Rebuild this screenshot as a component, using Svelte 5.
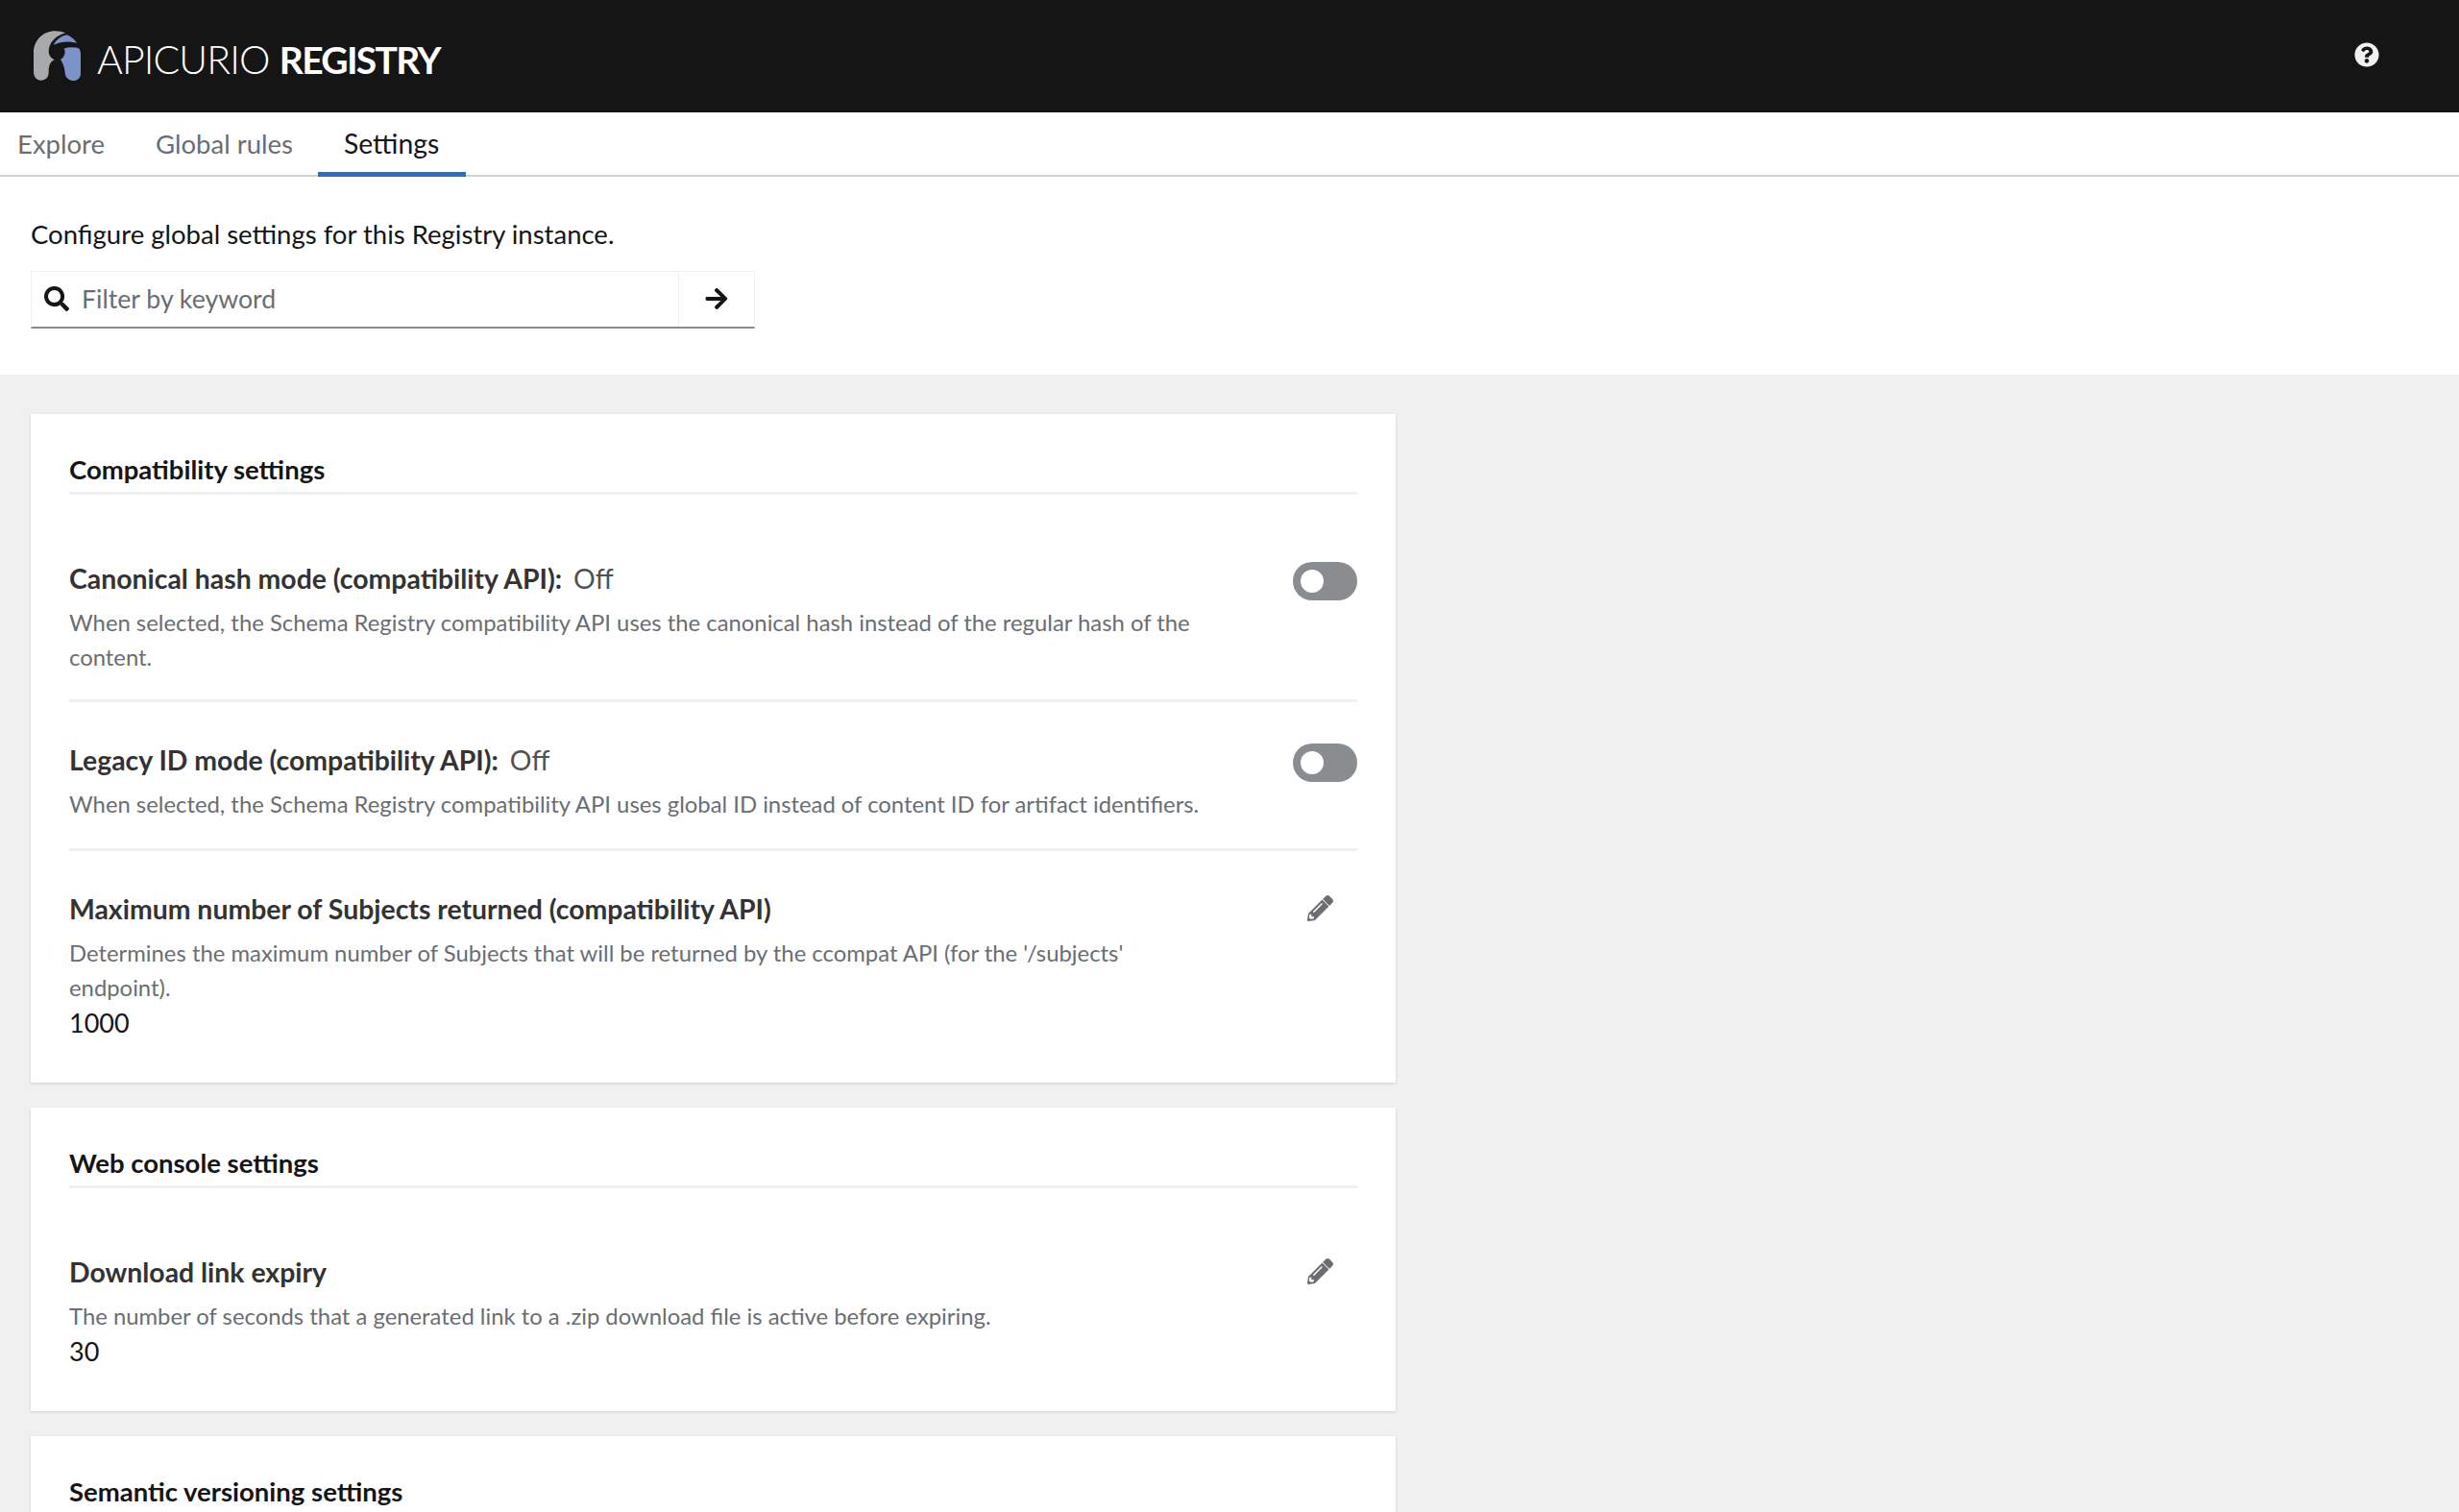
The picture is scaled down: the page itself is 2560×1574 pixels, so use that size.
<script>
    const tabs = ["Explore", "Global rules", "Settings"];

    const groups = [
        {
            title: "Compatibility settings",
            rows: [
                {
                    label: "Canonical hash mode (compatibility API):",
                    state: "Off",
                    desc: "When selected, the Schema Registry compatibility API uses the canonical hash instead of the regular hash of the content.",
                },
                {
                    label: "Legacy ID mode (compatibility API):",
                    state: "Off",
                    desc: "When selected, the Schema Registry compatibility API uses global ID instead of content ID for artifact identifiers.",
                },
                {
                    label: "Maximum number of Subjects returned (compatibility API)",
                    desc: "Determines the maximum number of Subjects that will be returned by the ccompat API (for the '/subjects' endpoint).",
                    value: "1000",
                },
            ],
        },
        {
            title: "Web console settings",
            rows: [
                {
                    label: "Download link expiry",
                    desc: "The number of seconds that a generated link to a .zip download file is active before expiring.",
                    value: "30",
                },
            ],
        },
        { title: "Semantic versioning settings", rows: [] },
    ];
</script>

<div class="page">
    <header class="masthead">
        <div class="brand">
            <svg class="logo" viewBox="0 0 240 210" aria-hidden="true">
                <path
                    fill="#a8a9ab"
                    d="M45 165V105C45 65 75 37 112 37c12 0 23 2 33 6-27 7-47 25-52 48-3 17 3 29 17 36-10 4-16 13-18 28v12c0 13-10 24-24 24-13 0-23-11-23-26z"
                />
                <path
                    fill="#7b93c8"
                    d="M108 80c6-15 22-28 42-31 13 6 24 15 30 26-22-7-48-6-72 5z"
                />
                <path
                    fill="#7b93c8"
                    d="M140 92c14-5 34-6 48 0 3 6 4 12 4 18v60c0 12-9 22-24 22-14 0-24-11-25-24-1-16-6-30-14-42 12-8 17-22 11-34z"
                />
            </svg>
            <span class="brand-name">APICURIO <b>REGISTRY</b></span>
        </div>
        <svg class="help" viewBox="0 0 512 512" aria-hidden="true">
            <path
                fill="#f0f0f0"
                d="M504 256c0 137-111 248-248 248S8 393 8 256 119 8 256 8s248 111 248 248zM263 90c-55 0-90 23-117 64-4 5-3 12 3 16l35 26c5 4 13 3 17-2 18-23 30-36 57-36 20 0 45 13 45 32 0 15-12 22-32 33-23 13-54 30-54 71v4c0 7 5 12 12 12h56c7 0 12-5 12-12v-1c0-29 83-30 83-106 0-57-59-101-117-101zm-7 245c-25 0-46 21-46 46s21 46 46 46 46-21 46-46-21-46-46-46z"
            />
        </svg>
    </header>

    <nav class="tabs">
        {#each tabs as tab}
            <span class="tab" class:active={tab === "Settings"}>{tab}</span>
        {/each}
    </nav>

    <section class="toolbar">
        <p class="intro">Configure global settings for this Registry instance.</p>
        <div class="search">
            <div class="search-input">
                <svg class="search-icon" viewBox="0 0 512 512" aria-hidden="true">
                    <path
                        fill="#151515"
                        d="M505 443 405 343c-4-4-10-7-17-7h-16c28-35 44-80 44-128C416 93 323 0 208 0S0 93 0 208s93 208 208 208c48 0 93-16 128-44v16c0 7 3 13 7 17l100 100c9 9 25 9 34 0l28-28c9-10 9-25 0-34zM208 336c-71 0-128-57-128-128S137 80 208 80s128 57 128 128-57 128-128 128z"
                    />
                </svg>
                <span class="placeholder">Filter by keyword</span>
            </div>
            <div class="search-go">
                <svg class="arrow" viewBox="0 0 448 512" aria-hidden="true">
                    <path
                        fill="#151515"
                        d="m190 66 22-22c10-9 25-9 34 0l194 194c9 10 9 25 0 34L246 466c-9 9-24 9-34 0l-22-22c-9-10-9-25 0-35l120-114H24c-13 0-24-11-24-24v-32c0-13 11-24 24-24h286L190 101c-9-10-10-25 0-35z"
                    />
                </svg>
            </div>
        </div>
    </section>

    <main class="content">
        {#each groups as group}
            <section class="card">
                <h2 class="card-title">{group.title}</h2>
                <div class="rows">
                    {#each group.rows as row}
                        <div class="row">
                            <div class="row-text">
                                <div class="row-head">
                                    <span class="row-label">{row.label}</span>
                                    {#if row.state}<span class="row-state">{row.state}</span>{/if}
                                </div>
                                <p class="row-desc">{row.desc}</p>
                                {#if row.value}<div class="row-value">{row.value}</div>{/if}
                            </div>
                            {#if row.state}
                                <span class="switch"><span class="knob"></span></span>
                            {:else}
                                <svg class="pencil" viewBox="0 0 512 512" aria-hidden="true">
                                    <path
                                        fill="#6a6e73"
                                        d="M497 75 437 15c-20-20-52-20-72 0l-50 50c-5 5-5 13 0 18l114 114c5 5 13 5 18 0l50-50c20-20 20-52 0-72zM285 95 19 361 0 486c-3 16 11 29 26 26l125-19 266-266c5-5 5-13 0-18L303 95c-5-5-13-5-18 0zM118 338c-6-6-6-15 0-20l156-156c6-6 15-6 20 0s6 15 0 20L138 338c-6 6-15 6-20 0zm-36 85h48v37l-65 11-31-31 11-65h37v48z"
                                    />
                                </svg>
                            {/if}
                        </div>
                    {/each}
                </div>
            </section>
        {/each}
    </main>
</div>

<style>
    :global(body) {
        margin: 0;
        background: #f0f0f0;
    }

    .page {
        height: 1574px;
        overflow: hidden;
        font-family: Lato, "Noto Sans", sans-serif;
        color: #151515;
        font-size: 27.5px;
    }

    .masthead {
        height: 117px;
        box-sizing: border-box;
        background: #151515;
        display: flex;
        align-items: center;
        justify-content: space-between;
        padding: 0 83px 0 20px;
    }

    .brand {
        display: flex;
        align-items: center;
    }

    .logo {
        width: 80px;
        height: 70px;
        margin-bottom: 7px;
    }

    .brand-name {
        margin: 5px 0 0 1px;
        font-family: Lato, sans-serif;
        color: #fff;
        font-size: 41px;
        font-weight: 300;
        letter-spacing: -0.9px;
    }

    .brand-name b {
        font-size: 39px;
        font-weight: 700;
        letter-spacing: -1.7px;
    }

    .help {
        width: 26px;
        height: 26px;
        margin-bottom: 3px;
    }

    .tabs {
        height: 67px;
        box-sizing: border-box;
        background: #fff;
        border-bottom: 2px solid #d2d2d2;
        display: flex;
    }

    .tab {
        height: 67px;
        box-sizing: border-box;
        padding: 0 26px;
        display: flex;
        align-items: center;
        padding-bottom: 2px;
        color: #6a6e73;
    }

    .tab:first-child {
        padding-left: 18px;
        padding-right: 27px;
    }

    .tab.active {
        color: #151515;
        font-size: 28.3px;
        padding: 3px 28px 2px 27px;
        border-bottom: 5px solid #2b6cc4;
    }

    .toolbar {
        height: 206px;
        box-sizing: border-box;
        background: #fff;
        padding: 40px 32px 0;
    }

    .intro {
        margin: 0 0 19px;
        line-height: 39px;
    }

    .search {
        width: 754px;
        height: 60px;
        box-sizing: border-box;
        display: flex;
        border: 1px solid #f0f0f0;
        border-bottom: 2px solid #8a8d90;
    }

    .search-input {
        flex: 1;
        display: flex;
        align-items: center;
        gap: 13px;
        padding-left: 13px;
    }

    .search-icon {
        width: 26px;
        height: 26px;
        margin-bottom: 2px;
    }

    .placeholder {
        color: #6a6e73;
        font-size: 26.7px;
        margin-bottom: 1px;
    }

    .search-go {
        width: 78px;
        display: flex;
        align-items: center;
        justify-content: center;
        border-left: 1px solid #f0f0f0;
    }

    .arrow {
        width: 26px;
        height: 26px;
        margin-bottom: 2px;
    }

    .content {
        padding: 41px 32px 0;
        display: flex;
        flex-direction: column;
        gap: 26px;
    }

    .card {
        width: 1421px;
        box-sizing: border-box;
        background: #fff;
        padding: 36px 40px 43px;
        box-shadow: 0 1px 3px rgba(3, 3, 3, 0.14);
    }

    .card-title {
        margin: 0;
        height: 45px;
        font-size: 27.5px;
        font-weight: 700;
        line-height: 44px;
        border-bottom: 3px solid #f0f0f0;
    }

    .rows {
        padding-top: 67px;
    }

    .row {
        display: flex;
        justify-content: space-between;
        padding-bottom: 26px;
        margin-bottom: 40px;
        border-bottom: 3px solid #f0f0f0;
    }

    .row:nth-child(2) {
        padding-bottom: 28px;
    }

    .row:last-child {
        border-bottom: none;
        padding-bottom: 0;
        margin-bottom: 0;
    }

    .row-text {
        width: 1190px;
    }

    .row-head {
        line-height: 40px;
        display: flex;
        gap: 12px;
    }

    .row-label {
        font-size: 28.4px;
        font-weight: 700;
        color: #333;
    }

    .row-state {
        font-size: 28.4px;
        color: #4f5255;
    }

    .row-desc {
        margin: 8px 0 0;
        font-size: 23.85px;
        line-height: 36px;
        color: #6a6e73;
    }

    .row-value {
        font-size: 27px;
        line-height: 38px;
    }

    .switch {
        width: 67px;
        height: 40px;
        margin-top: 3px;
        border-radius: 20px;
        background: #8a8d90;
        display: block;
        position: relative;
    }

    .knob {
        position: absolute;
        left: 8px;
        top: 8px;
        width: 24px;
        height: 24px;
        border-radius: 50%;
        background: #fff;
    }

    .pencil {
        width: 27px;
        height: 27px;
        margin: 6px 25px 0 0;
    }
</style>
